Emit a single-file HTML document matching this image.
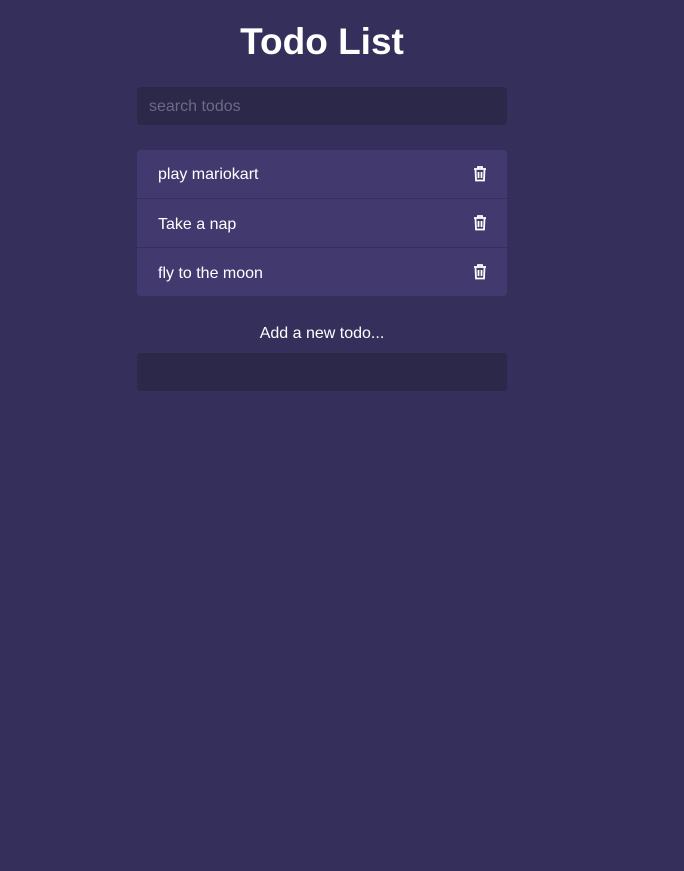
<!DOCTYPE html>
<html><head><style>
body{margin:0;background:#352f5b;font-family:"Liberation Sans",sans-serif;color:#fff;width:684px;height:871px;overflow:hidden}
h1{position:absolute;left:137px;width:370px;top:19px;margin:0;text-align:center;font-size:37px;font-weight:bold;line-height:46px}
.box{position:absolute;left:137px;width:370px;border-radius:4px}
.search{top:87px;height:38px;background:#2c2849;color:#6c6a86;font-size:16px;line-height:40px;box-sizing:border-box;padding-left:12px}
.list{top:150px;background:#423a6f;overflow:hidden}
.item{height:49px;line-height:51px;padding-left:21px;font-size:16px;border-top:1px solid #352f5b;position:relative;box-sizing:border-box}
.item:first-child{border-top:none;height:48px;line-height:50px}
.item svg{position:absolute;right:20px;top:16px}
.add{position:absolute;left:137px;width:370px;top:323px;text-align:center;font-size:16px;line-height:22px}
.inp{top:353px;height:38px;background:#2c2849}
</style></head><body>
<h1>Todo List</h1>
<div class="box search">search todos</div>
<div class="box list">
<div class="item">play mariokart<svg width="14" height="16" viewBox="0 0 14 16"><path d="M1 3h12M5 3V1h4v2M2.5 3.5l.5 11h8l.5-11M5.5 6v6M8.5 6v6" stroke="#fff" stroke-width="1.8" fill="none"/></svg></div>
<div class="item">Take a nap<svg width="14" height="16" viewBox="0 0 14 16"><path d="M1 3h12M5 3V1h4v2M2.5 3.5l.5 11h8l.5-11M5.5 6v6M8.5 6v6" stroke="#fff" stroke-width="1.8" fill="none"/></svg></div>
<div class="item">fly to the moon<svg width="14" height="16" viewBox="0 0 14 16"><path d="M1 3h12M5 3V1h4v2M2.5 3.5l.5 11h8l.5-11M5.5 6v6M8.5 6v6" stroke="#fff" stroke-width="1.8" fill="none"/></svg></div>
</div>
<div class="add">Add a new todo...</div>
<div class="box inp"></div>
</body></html>
